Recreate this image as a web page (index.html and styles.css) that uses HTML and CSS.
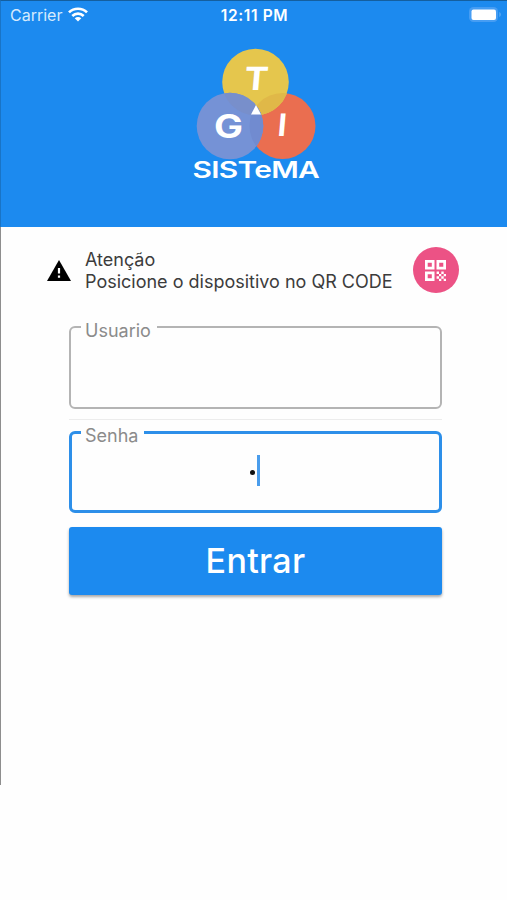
FILE: index.html
```
<!DOCTYPE html>
<html lang="pt">
<head>
  <meta charset="UTF-8">
  <title>GTI Sistema</title>
  <meta name="viewport" content="width=device-width, initial-scale=1.0">
  <link rel="stylesheet" href="styles.css">
</head>
<body>

<div class="screen">
  <header class="header">
    <div class="status-bar">
      <div class="carrier">
        <span>Carrier</span>
        <svg class="wifi" viewBox="0 0 20 15" width="20" height="15">
          <g fill="none" stroke="#fff" stroke-width="2.7">
            <path d="M1 5.4C6 .5 14 .5 19 5.4"/>
            <path d="M4.3 9C7.6 5.9 12.4 5.9 15.7 9"/>
          </g>
          <path fill="#fff" d="M6.7 11.2c2-1.7 4.6-1.7 6.6 0L10 14.6z"/>
        </svg>
      </div>
      <div class="clock">12:11 PM</div>
      <div class="battery-box">
        <svg viewBox="0 0 34 17" width="34" height="17">
          <rect x="1" y="1" width="29" height="15" rx="4.5" fill="#469df3"/>
          <path d="M31.3 6c2 .8 2 4.2 0 5z" fill="#5aaaf5"/>
          <rect x="3.5" y="3.5" width="24.5" height="10.5" rx="2" fill="#fff"/>
        </svg>
      </div>
    </div>
    <svg class="logo" viewBox="0 0 150 150" width="150" height="150">
      <defs>
        <clipPath id="top-circle"><circle cx="75.5" cy="42" r="33.3"/></clipPath>
        <clipPath id="left-circle"><circle cx="50" cy="86" r="33.3"/></clipPath>
      </defs>
      <circle cx="102.5" cy="86" r="33" fill="#ea6e50"/>
      <circle cx="75.5" cy="42" r="33.3" fill="#e5c64d"/>
      <circle cx="102.5" cy="86" r="33" fill="#e0b848" clip-path="url(#top-circle)"/>
      <circle cx="50" cy="86" r="33.3" fill="#7592d6"/>
      <circle cx="75.5" cy="42" r="33.3" fill="#788fcb" clip-path="url(#left-circle)"/>
      <circle cx="102.5" cy="86" r="33" fill="#718bd0" clip-path="url(#left-circle)"/>
      <path d="M76 65L81 74.5H71Z" fill="#fff"/>
      <g class="logo-text">
        <text x="68" y="50.5" font-size="32" textLength="24" lengthAdjust="spacingAndGlyphs" transform="skewX(-5)">T</text>
        <text x="34" y="98" font-size="32" textLength="29" lengthAdjust="spacingAndGlyphs">G</text>
        <text x="105.5" y="96.5" font-size="31" transform="skewX(-5)">I</text>
        <text class="logo-name" x="9.6" y="138" font-size="23" textLength="98" transform="scale(1.3 1)">SISTeMA</text>
      </g>
    </svg>
  </header>

  <main class="content">
    <div class="notice">
      <svg class="warning" viewBox="0 0 24 21" width="24" height="21">
        <path d="M12 0L24 21H0z"/>
        <path fill="#fff" d="M10.9 8h2.2v5.5h-2.2zM10.9 15.5h2.2v2.2h-2.2z"/>
      </svg>
      <div class="notice-text">
        <div class="notice-title">Atenção</div>
        <div class="notice-info">Posicione o dispositivo no QR CODE</div>
      </div>
      <button class="qr-button" type="button" aria-label="QR CODE">
        <svg viewBox="0 0 21 21" width="21" height="21">
          <path fill="none" stroke="#fff" stroke-width="2.7" d="M1.35 1.35h6.8v6.8h-6.8zM12.85 1.35h6.8v6.8h-6.8zM1.35 12.85h6.8v6.8h-6.8z"/>
          <path fill="#fff" d="M11.6 11.6H14v2.4h-2.4zM14 14h2.3v2.3H14zM16.3 11.6h2.4V14h-2.4zM18.7 14H21v2.3h-2.3zM11.6 16.3H14v2.4h-2.4zM14 18.7h2.3V21H14zM16.3 16.3h2.4v2.4h-2.4zM18.7 18.7H21V21h-2.3z"/>
        </svg>
      </button>
    </div>

    <form class="login">
      <fieldset class="field">
        <legend class="legend">Usuario</legend>
      </fieldset>
      <div class="divider"></div>
      <fieldset class="field focused">
        <legend class="legend">Senha</legend>
        <div class="password">
          <span class="dot"></span>
          <span class="caret"></span>
        </div>
      </fieldset>
      <button class="submit" type="button">Entrar</button>
    </form>
  </main>
</div>

</body>
</html>
```
FILE: styles.css
```
* {
  box-sizing: border-box;
}

body {
  margin: 0;
  background-color: #fefefe;
  font-family: Inter, "Liberation Sans", sans-serif;
}

.screen {
  height: 785px;
  border-left: 1px solid #8e8e8e;
}

.header {
  display: flex;
  flex-direction: column;
  height: 227px;
  margin-left: -1px;
  background-color: #1c8aef;
  border-top: 1px solid #145f9f;
  border-left: 1px solid #1974c6;
}

.status-bar {
  display: flex;
  justify-content: space-between;
  height: 39px;
  padding: 5px 5px 0 9px;
  color: #fff;
  font-size: 16px;
  line-height: 19px;
}

.carrier {
  display: flex;
  gap: 6px;
  width: 180px;
  color: #d5eafd;
}

.wifi {
  margin-top: 1px;
}

.clock {
  margin-right: 3px;
  font-size: 15.5px;
  font-weight: 600;
  letter-spacing: 0.6px;
}

.battery-box {
  display: flex;
  justify-content: flex-end;
  width: 180px;
}

.logo {
  margin-left: 179px;
}

.logo-text {
  fill: #fff;
  font-family: Inter, sans-serif;
  font-weight: 700;
}

.logo-name {
  font-weight: 600;
}

.notice {
  display: flex;
  align-items: center;
  height: 46px;
  margin-top: 20px;
  padding-left: 46px;
}

.notice-text {
  width: 342px;
  padding: 2px 0 0 14px;
  color: #3c3c3c;
  font-size: 18px;
  line-height: 22px;
  white-space: nowrap;
}

.qr-button {
  display: flex;
  align-items: center;
  justify-content: center;
  width: 46px;
  height: 46px;
  padding: 0 1px 0 0;
  border: 0;
  border-radius: 50%;
  background-color: #ec5285;
}

.login {
  display: flex;
  flex-direction: column;
  margin: 33px 65px 0 68px;
}

.field {
  height: 83px;
  margin: 0;
  padding: 0 0 0 10px;
  border: 2px solid #b4b4b4;
  border-radius: 6px;
}

/* thin legend keeps the notch while the label hangs below the line */
.legend {
  height: 2px;
  padding: 0 6px 0 4px;
  color: #8b8b8b;
  font-size: 18px;
  line-height: 10px;
}

.divider {
  height: 1px;
  margin: 10px 0 11px;
  background-color: #ececec;
}

.focused {
  height: 82px;
  padding-left: 9px;
  border: 3px solid #2d8fe9;
}

.focused .legend {
  line-height: 8px;
}

.password {
  display: flex;
  align-items: center;
  justify-content: center;
  height: 73px;
  padding-right: 10px;
}

.dot {
  width: 5px;
  height: 5px;
  margin-top: 3px;
  border-radius: 50%;
  background-color: #111;
}

.caret {
  width: 3px;
  height: 31px;
  margin-left: 2px;
  background-color: #4a9dec;
}

.submit {
  height: 68px;
  margin-top: 14px;
  padding: 0 0 1px;
  border: 0;
  border-radius: 3px;
  background-color: #1c8aef;
  box-shadow: 0 2px 3px rgba(0, 0, 0, 0.35);
  color: #fff;
  font-family: inherit;
  font-size: 34px;
  font-weight: 500;
  letter-spacing: 0.3px;
}
```
